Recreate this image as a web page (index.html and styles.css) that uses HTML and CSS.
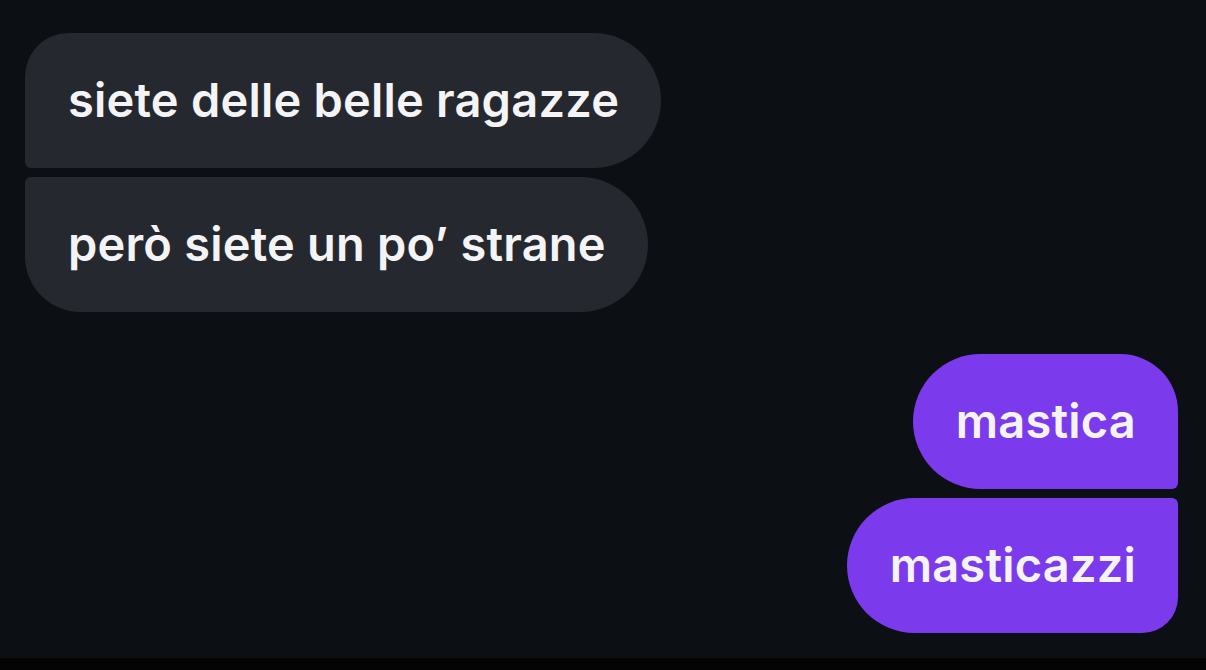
FILE: index.html
```html
<!DOCTYPE html>
<html lang="it">
<head>
<meta charset="utf-8">
<title>Chat</title>
<link rel="stylesheet" href="styles.css">
</head>
<body>
<main class="chat">
  <div class="group incoming">
    <div class="bubble first">siete delle belle ragazze</div>
    <div class="bubble last">però siete un po’ strane</div>
  </div>
  <div class="group outgoing">
    <div class="bubble first">mastica</div>
    <div class="bubble last">masticazzi</div>
  </div>
</main>
<div class="bottom-bar"></div>
</body>
</html>
```

FILE: styles.css
```css
* { box-sizing: border-box; }
html, body {
  margin: 0;
  padding: 0;
  background: #0c0f13;
}
body {
  width: 1206px;
  height: 670px;
  overflow: hidden;
  font-family: Inter, "Noto Sans", sans-serif;
}
.chat {
  height: 658px;
  padding: 33px 28px 0 25px;
  display: flex;
  flex-direction: column;
  gap: 42px;
}
.group {
  display: flex;
  flex-direction: column;
  gap: 9px;
}
.incoming { align-items: flex-start; }
.outgoing { align-items: flex-end; }
.bubble {
  height: 135px;
  display: flex;
  align-items: center;
  padding: 0 42px 2px 43px;
  font-size: 47px;
  line-height: 1;
  font-weight: 600;
  letter-spacing: 0.2px;
  color: #f4f4f7;
  white-space: nowrap;
}
.incoming .bubble {
  background: #25282e;
}
.incoming .first {
  border-radius: 44px 68px 68px 6px;
}
.incoming .last {
  border-radius: 6px 68px 68px 56px;
}
.outgoing .bubble {
  background: #7c3aed;
}
.outgoing .first {
  border-radius: 68px 58px 6px 68px;
}
.outgoing .last {
  border-radius: 68px 6px 36px 68px;
}
.bottom-bar {
  height: 12px;
  background: #040404;
}
```
